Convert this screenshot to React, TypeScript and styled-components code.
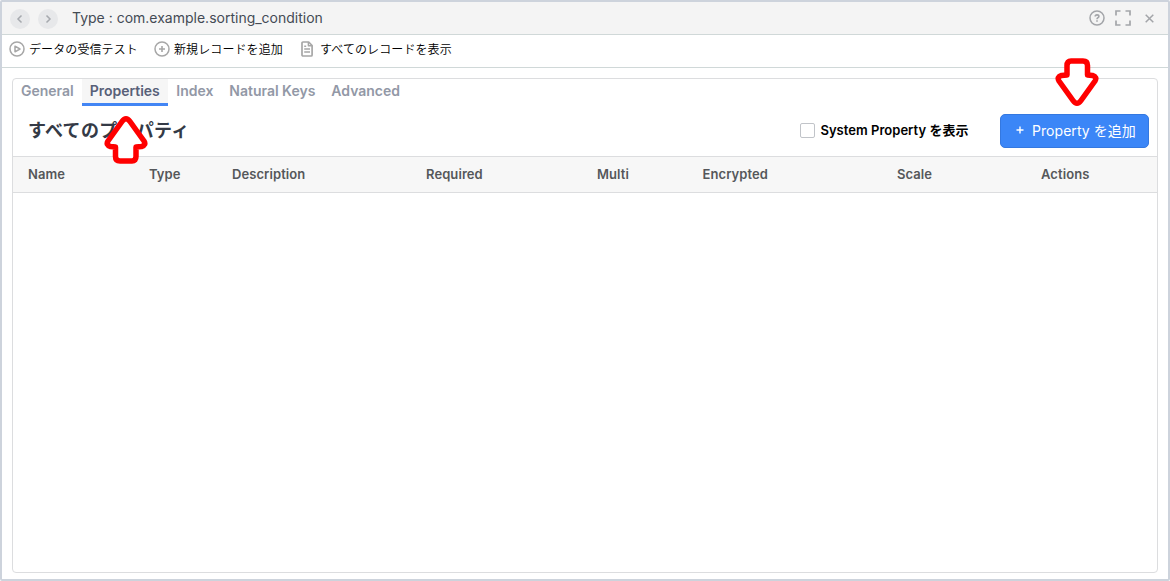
import React from 'react';
import styled, { createGlobalStyle } from 'styled-components';

const GlobalStyle = createGlobalStyle`
  * { box-sizing: border-box; }
  body {
    margin: 0;
    background: #fff;
    font-family: Inter, 'Noto Sans CJK JP', sans-serif;
  }
`;

const Window = styled.div`
  display: flex;
  flex-direction: column;
  width: 1170px;
  height: 581px;
  border: 2px solid #cdd3dc;
  border-radius: 2px;
  background: #fff;
`;

const TitleBar = styled.header`
  display: flex;
  align-items: center;
  height: 33px;
  padding: 0 14px 0 8px;
  background: #f4f4f4;
  border-bottom: 1px solid #d0d8d8;
`;

const NavButton = styled.button`
  display: flex;
  align-items: center;
  justify-content: center;
  width: 20px;
  height: 20px;
  margin: 1px 8px 0 0;
  padding: 0;
  border: 0;
  border-radius: 50%;
  background: #e7e8ea;
  color: #a6a9ae;
`;

const Title = styled.div`
  flex: 1;
  margin-left: 6px;
  font-size: 14px;
  line-height: 20px;
  color: #444b54;
`;

const WindowControls = styled.div`
  display: flex;
  align-items: center;
  gap: 10px;
  color: #a3a5a9;

  svg { display: block; }
  svg:last-child { margin-left: 4px; }
`;

const Toolbar = styled.nav`
  display: flex;
  align-items: center;
  height: 33px;
  padding: 0 0 2px 7px;
  border-bottom: 1px solid #d0d8d8;
`;

const ToolItem = styled.button<{ $width: number; $gap: number }>`
  display: flex;
  align-items: center;
  gap: ${(p) => p.$gap}px;
  width: ${(p) => p.$width}px;
  padding: 0;
  border: 0;
  background: none;
  color: #000;
  font: 350 12px/18px Inter, 'Noto Sans CJK JP', sans-serif;
  letter-spacing: 0.1px;
  white-space: nowrap;

  svg { flex: none; margin-bottom: 2px; color: #a7a7a7; }
`;

const Panel = styled.main`
  flex: 1;
  margin: 10px 10px 6px;
  border: 1px solid #dcdddf;
  border-radius: 4px;
`;

const Tabs = styled.div`
  display: flex;
  height: 27px;
`;

const Tab = styled.div<{ $active?: boolean }>`
  padding: 2px ${(p) => (p.$active ? 8.5 : 8)}px 0 8px;
  border-bottom: 3px solid ${(p) => (p.$active ? '#4285f4' : 'transparent')};
  background: ${(p) => (p.$active ? '#f6f6f6' : 'transparent')};
  color: ${(p) => (p.$active ? '#586078' : '#9298a6')};
  font-size: 14px;
  font-weight: 600;
  line-height: 20px;
  letter-spacing: -0.01px;
  white-space: nowrap;
`;

const SectionHead = styled.div`
  display: flex;
  align-items: center;
  height: 50px;
  padding: 0 8px 0 15px;
`;

const Heading = styled.h1`
  flex: 1;
  margin: 0;
  font-size: 18px;
  font-weight: 600;
  line-height: 26px;
  letter-spacing: 0.3px;
  color: #343a46;
`;

const CheckLabel = styled.label`
  display: flex;
  align-items: center;
  gap: 5px;
  margin: 0 31.5px 2px 0;
  font-size: 13px;
  font-weight: 600;
  line-height: 20px;
  letter-spacing: 0.03px;
  color: #000;
`;

const Checkbox = styled.span`
  width: 15px;
  height: 15px;
  border: 1px solid #c1c4c9;
  border-radius: 2px;
  background: #fff;
`;

const AddButton = styled.button`
  display: flex;
  align-items: center;
  width: 149px;
  height: 34px;
  padding: 0 0 0 15px;
  border: 1px solid #3478e0;
  border-radius: 5px;
  background: #3b86f7;
  color: #fff;
  font: 14px/20px Inter, 'Noto Sans CJK JP', sans-serif;
  letter-spacing: 0.05px;
  white-space: nowrap;

  svg { margin: 0 8px 2px 0; }
`;

const TableHead = styled.div`
  display: grid;
  grid-template-columns: 121px 83px 194px 171px 105.5px 194.5px 144px 1fr;
  align-items: center;
  height: 37px;
  padding: 0 0 1px 15px;
  border: solid #dcdddf;
  border-width: 1px 0;
  background: #f7f7f7;
  color: #55575a;
  font-size: 13px;
  font-weight: 600;
  line-height: 20px;
  letter-spacing: 0.08px;
`;

const Pointer = styled.svg<{ $x: number; $y: number; $up?: boolean }>`
  position: absolute;
  left: ${(p) => p.$x}px;
  top: ${(p) => p.$y}px;
  transform: ${(p) => (p.$up ? 'rotate(180deg)' : 'none')};
`;

const Chevron = ({ d }: { d: string }) => (
  <svg width="8" height="10" viewBox="0 0 8 10" fill="none" stroke="currentColor" strokeWidth="1.5">
    <path d={d} />
  </svg>
);

const PlayIcon = () => (
  <svg width="16" height="16" viewBox="0 0 16 16" fill="none" stroke="currentColor" strokeWidth="1.5" strokeLinejoin="round">
    <circle cx="8" cy="8" r="7" />
    <path d="M6 5.2v5.6L11 8z" />
  </svg>
);

const PlusCircleIcon = () => (
  <svg width="16" height="16" viewBox="0 0 16 16" fill="none" stroke="currentColor" strokeWidth="1.5">
    <circle cx="8" cy="8" r="7" />
    <path d="M8 5v6M5 8h6" strokeWidth="1.6" />
  </svg>
);

const FileIcon = () => (
  <svg width="12" height="16" viewBox="0 0 12 16" fill="none" stroke="currentColor" strokeWidth="1.7" strokeLinejoin="round">
    <path d="M2 1h5.7L11.1 4.5V14a1 1 0 0 1-1 1H2a1 1 0 0 1-1-1V2a1 1 0 0 1 1-1z" />
    <path d="M7.4 1v3.8h3.8M3.2 8h5.8M3.2 11h5.8M3.2 5.3h2" strokeWidth="1.5" />
  </svg>
);

const HelpIcon = () => (
  <svg width="16" height="16" viewBox="0 0 16 16" fill="none" stroke="currentColor" strokeWidth="1.5">
    <circle cx="8" cy="8" r="7" />
    <path d="M6.2 6.6c0-1.1.7-1.7 1.8-1.7s1.9.6 1.9 1.6C9.9 7.7 8 7.7 8 9.2M8 10.3v1.5" strokeWidth="1.6" />
  </svg>
);

const ExpandIcon = () => (
  <svg width="16" height="16" viewBox="0 0 16 16" fill="none" stroke="currentColor" strokeWidth="1.7">
    <path d="M1 5.5V1h4.5M10.5 1H15v4.5M15 10.5V15h-4.5M5.5 15H1v-4.5" />
  </svg>
);

const CloseIcon = () => (
  <svg width="9" height="9" viewBox="0 0 9 9" fill="none" stroke="currentColor" strokeWidth="1.5">
    <path d="M.7.7l7.6 7.6M8.3.7L.7 8.3" />
  </svg>
);

const AddIcon = () => (
  <svg width="8" height="8" viewBox="0 0 8 8" fill="none" stroke="currentColor" strokeWidth="1.4">
    <path d="M4 .5v7M.5 4h7" />
  </svg>
);

const Arrow = ({ x, y, up }: { x: number; y: number; up?: boolean }) => (
  <Pointer $x={x} $y={y} $up={up} width="44" height="49" viewBox="0 0 44 49">
    <path
      d="M16 3H28Q32.5 3 32.5 7.5V17L37.5 17.5Q42.5 19 40 23L26 42.5Q22 48 18 42.5L4 23Q1.500 19 6.500 17.5L12 17V7.5Q12 3 16 3Z"
      fill="#fff"
      stroke="#f00"
      strokeWidth="5.5"
      strokeLinejoin="round"
    />
  </Pointer>
);

const tabs = ['General', 'Properties', 'Index', 'Natural Keys', 'Advanced'];
const columns = ['Name', 'Type', 'Description', 'Required', 'Multi', 'Encrypted', 'Scale', 'Actions'];

export default function App() {
  return (
    <>
      <GlobalStyle />
      <Window>
        <TitleBar>
          <NavButton aria-label="Back"><Chevron d="M5.5 1.5L2 5l3.5 3.5" /></NavButton>
          <NavButton aria-label="Forward"><Chevron d="M2.5 1.5L6 5 2.5 8.5" /></NavButton>
          <Title>Type : com.example.sorting_condition</Title>
          <WindowControls>
            <HelpIcon />
            <ExpandIcon />
            <CloseIcon />
          </WindowControls>
        </TitleBar>
        <Toolbar>
          <ToolItem $width={145} $gap={4}><PlayIcon />データの受信テスト</ToolItem>
          <ToolItem $width={147} $gap={4}><PlusCircleIcon />新規レコードを追加</ToolItem>
          <ToolItem $width={160} $gap={7}><FileIcon />すべてのレコードを表示</ToolItem>
        </Toolbar>
        <Panel>
          <Tabs>
            {tabs.map((name) => <Tab key={name} $active={name === 'Properties'}>{name}</Tab>)}
          </Tabs>
          <SectionHead>
            <Heading>すべてのプロパティ</Heading>
            <CheckLabel><Checkbox />System Property を表示</CheckLabel>
            <AddButton><AddIcon />Property を追加</AddButton>
          </SectionHead>
          <TableHead>
            {columns.map((name) => <span key={name}>{name}</span>)}
          </TableHead>
        </Panel>
      </Window>
      <Arrow x={1055} y={58} />
      <Arrow x={104} y={115} up />
    </>
  );
}
